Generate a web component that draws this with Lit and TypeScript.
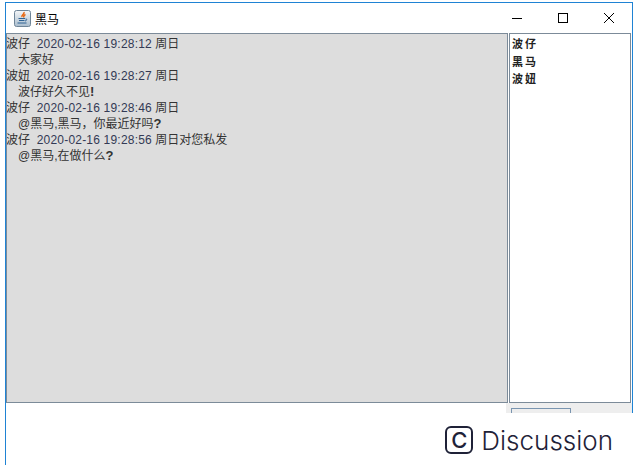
import { LitElement, html, css, svg } from "lit";
import { customElement } from "lit/decorators.js";

const messages = [
  { who: "波仔", time: "2020-02-16 19:28:12", tail: "周日", text: "大家好", end: "" },
  { who: "波妞", time: "2020-02-16 19:28:27", tail: "周日", text: "波仔好久不见", end: "!" },
  { who: "波仔", time: "2020-02-16 19:28:46", tail: "周日", text: "@黑马,黑马，你最近好吗", end: "?" },
  { who: "波仔", time: "2020-02-16 19:28:56", tail: "周日对您私发", text: "@黑马,在做什么", end: "?" },
];
const users = ["波仔", "黑马", "波妞"];

const javaIcon = svg`<svg class="java" width="17" height="17" viewBox="0 0 17 17">
  <defs><linearGradient id="jg" x1="0" y1="0" x2="0" y2="1"><stop offset="0" stop-color="#f4f6f8"/><stop offset="1" stop-color="#a9bccd"/></linearGradient></defs>
  <rect x=".5" y=".5" width="16" height="16" rx="2" fill="url(#jg)" stroke="#6f8598"/>
  <path d="M10 2c1 2-3 3-2 5M11.500 4.500c-2 1-2 2-1.500 3" fill="none" stroke="#e8650f" stroke-width="1.500"/>
  <path d="M4.500 8.500h6.500M5 10.500h5.500M3.500 13h9M11.500 9c1.500-.5 2 1.500-.5 2" fill="none" stroke="#2f6394" stroke-width="1"/>
</svg>`;

@customElement("app-root")
export class AppRoot extends LitElement {
  static styles = css`
    :host { display: block; width: 634px; height: 465px; background: #fff; overflow: hidden; padding: 2px 1px 0 5px; box-sizing: border-box; font-family: "Liberation Sans", "Noto Sans CJK SC", sans-serif; font-size: 12px; color: #333; }
    .window { border-left: 1px solid #1f83d4; height: 463px; display: flex; flex-direction: column; }
    .upper { border-top: 1px solid #1f83d4; border-right: 1px solid #1f83d4; display: flex; flex-direction: column; }
    .title { height: 30px; display: flex; align-items: center; background: #fff; color: #000; padding-left: 8px; }
    .java { flex: none; margin-right: 4px; }
    .caption { flex: 1; font-size: 12px; }
    .controls { display: flex; height: 30px; }
    .ctl { width: 46px; height: 30px; display: flex; align-items: center; justify-content: center; }
    .panes { display: flex; height: 370px; gap: 1px; }
    .chat { width: 502px; box-sizing: border-box; border: 1px solid #7c8b99; background: #dddddd; overflow: hidden; padding-top: 2px; line-height: 16px; color: #333; }
    .head { margin-left: -1px; white-space: pre; }
    .time { letter-spacing: .2px; color: #333a55; }
    .body { padding-left: 11px; white-space: pre; }
    .end { font-weight: 700; font-size: 13px; }
    .users { width: 122px; box-sizing: border-box; border: 1px solid #7c8b99; background: #fff; padding: 0 0 0 2px; }
    .user { height: 17.500px; line-height: 18px; font-weight: 700; font-size: 11px; letter-spacing: 2px; color: #222; font-family: "Noto Sans CJK SC", sans-serif; }
    .strip { height: 10px; display: flex; }
    .gap { width: 500px; background: #fff; }
    .toolbar { flex: 1; background: #eeeeee; padding: 5px 0 0 5px; overflow: hidden; }
    .btn { width: 60px; height: 12px; box-sizing: border-box; border: 1px solid #7a95b0; background: #eee; }
    .footer { flex: 1; display: flex; justify-content: flex-end; align-items: flex-start; padding: 11px 20px 0 0; background: #fff; }
    .mark { display: flex; align-items: center; gap: 8px; color: #1f2238; }
    .logo { width: 28px; height: 28px; box-sizing: border-box; border: 2.200px solid #1f2238; border-radius: 6px; display: flex; align-items: center; justify-content: center; font-family: Inter, sans-serif; font-weight: 500; font-size: 22px; line-height: 1; }
    .word { font-family: Inter, sans-serif; font-weight: 300; font-size: 26px; line-height: 30px; margin-top: 2px; }
  `;

  render() {
    return html`<div class="window">
      <div class="upper">
        <div class="title">
          ${javaIcon}
          <span class="caption">黑马</span>
          <div class="controls">
            <div class="ctl"><svg width="12" height="12" viewBox="0 0 12 12"><path d="M1 6.500h10" stroke="#000"/></svg></div>
            <div class="ctl"><svg width="12" height="12" viewBox="0 0 12 12"><rect x="1.500" y="1.500" width="9" height="9" fill="none" stroke="#000"/></svg></div>
            <div class="ctl"><svg width="12" height="12" viewBox="0 0 12 12"><path d="M1 1l10 10M11 1L1 11" stroke="#000" fill="none"/></svg></div>
          </div>
        </div>
        <div class="panes">
          <div class="chat">
            ${messages.map(
              (m) => html`<div class="head">${m.who}  <span class="time">${m.time}</span> ${m.tail}</div><div class="body">${m.text}<span class="end">${m.end}</span></div>`
            )}
          </div>
          <div class="users">${users.map((u) => html`<div class="user">${u}</div>`)}</div>
        </div>
        <div class="strip">
          <div class="gap"></div>
          <div class="toolbar"><div class="btn"></div></div>
        </div>
      </div>
      <div class="footer">
        <div class="mark"><span class="logo">C</span><span class="word">Discussion</span></div>
      </div>
    </div>`;
  }
}
